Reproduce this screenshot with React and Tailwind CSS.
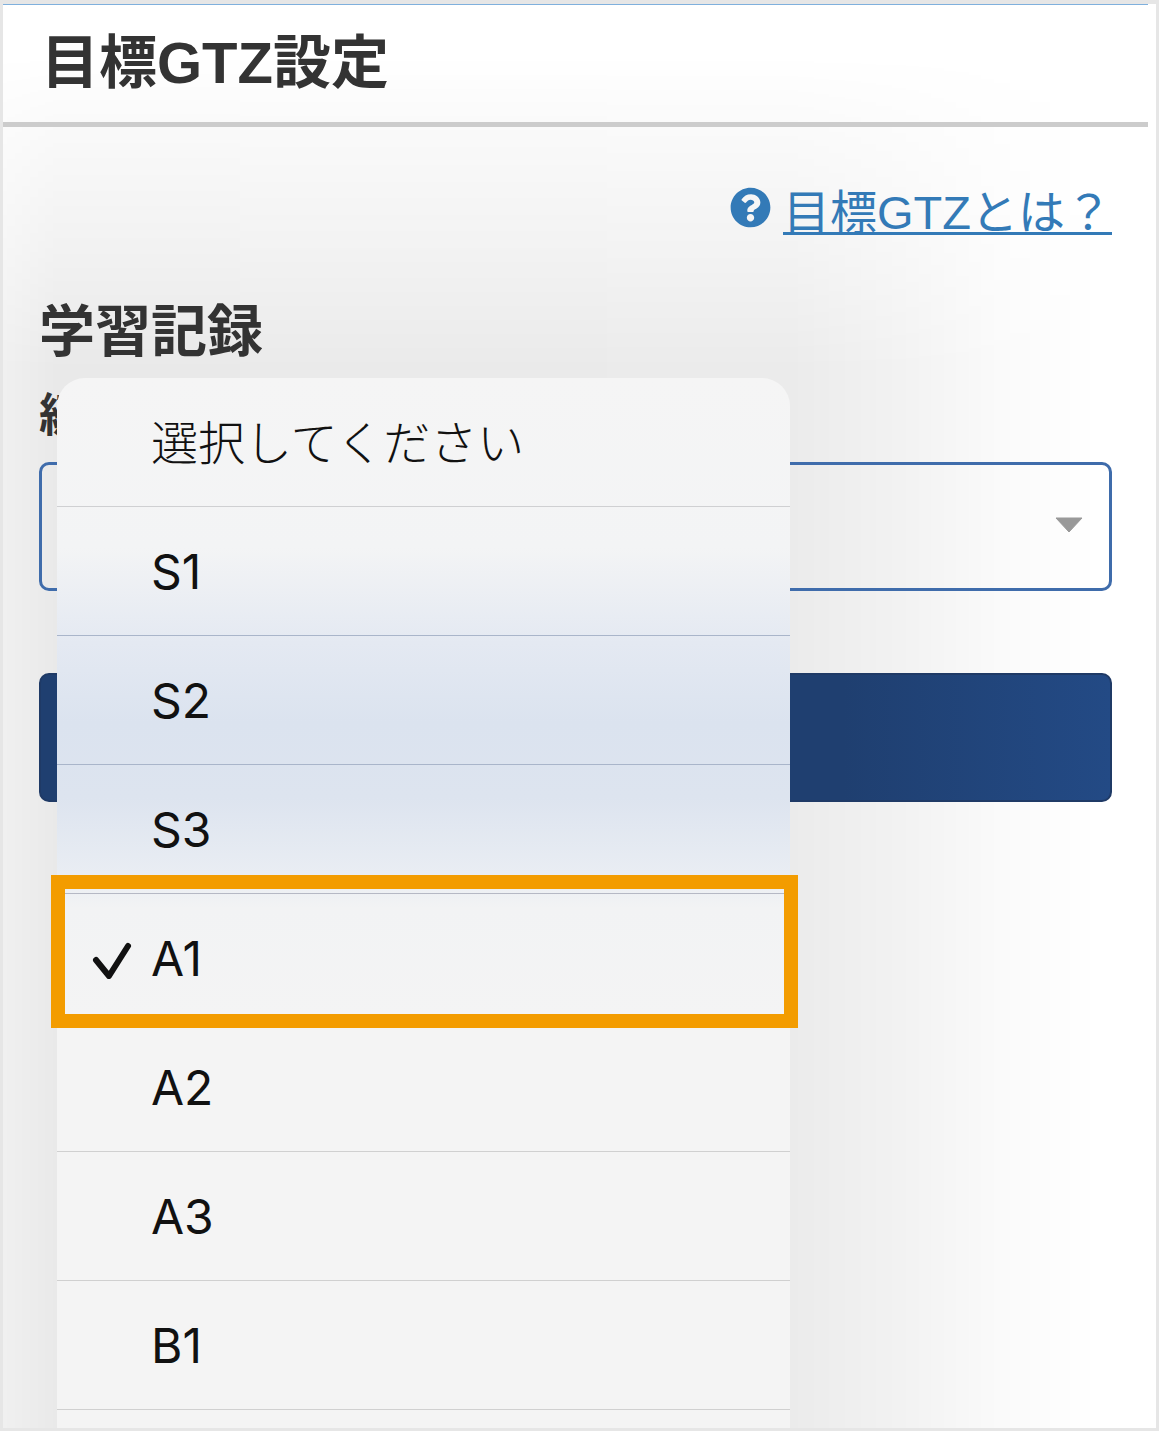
import { FaQuestionCircle } from 'react-icons/fa'

const options = [
  { label: '選択してください', line: 'border-[#cfd0d2]' },
  { label: 'S1', line: 'border-[#a9b5ca]' },
  { label: 'S2', line: 'border-[#a9b5ca]' },
  { label: 'S3', line: 'border-[#b5b8c4]' },
  { label: 'A1', line: 'border-[#d0d0d0]' },
  { label: 'A2', line: 'border-[#d0d0d0]' },
  { label: 'A3', line: 'border-[#d0d0d0]' },
  { label: 'B1', line: 'border-[#d0d0d0]' },
  { label: '', line: 'border-transparent' },
]

export default function App() {
  return (
    <div className="relative isolate w-[1159px] h-[1431px] overflow-hidden bg-white border-t-4 border-x-[3px] border-b-[3px] border-[#e6e6e6] font-['Liberation_Sans','Noto_Sans_CJK_JP',sans-serif] text-[#333]">
      {/* soft shade the open menu casts on the page behind it */}
      <div className="absolute inset-0 -z-10 bg-[linear-gradient(90deg,rgba(0,0,0,0.06)_0px,rgba(0,0,0,0.085)_54px,rgba(0,0,0,0.08)_787px,rgba(0,0,0,0.05)_897px,rgba(0,0,0,0.02)_997px,rgba(0,0,0,0)_1097px)] [mask-image:linear-gradient(180deg,transparent_50px,rgba(0,0,0,0.25)_123px,rgba(0,0,0,0.6)_246px,black_366px)]" />

      <header className="mr-[8px] h-[123px] border-t border-b-[5px] border-t-[#7fb0dd] border-b-[#ccc] pl-[38px] pb-[2px] flex items-center">
        <h1 className="text-[58px] leading-none font-bold">目標GTZ設定</h1>
      </header>

      <main className="pl-[36px] pr-[44px]">
        <div className="flex justify-end items-start pt-[60px] h-[112px]">
          <FaQuestionCircle className="w-[41px] h-[41px] text-[#337ab7] mr-[12px]" />
          <a href="#" className="block h-[49px] border-b-[3px] border-[#337ab7] text-[47px] leading-[54px] text-[#337ab7] mt-[-1px]">
            目標GTZとは？
          </a>
        </div>

        <h2 className="mt-[61px] text-[56px] leading-[64px] font-bold">学習記録</h2>
        <label className="block mt-[19px] text-[46px] leading-[64px] font-bold">級</label>

        <div className="mt-[15px] h-[129px] rounded-[10px] border-[3px] border-[#3f6cab] flex items-center justify-end pr-[26px]">
          <svg width="28" height="16" viewBox="0 0 28 16" className="mt-[-3px]">
            <path d="M1 1h26L14 15z" fill="#999" stroke="#999" strokeLinejoin="round" />
          </svg>
        </div>

        <button className="block w-full mt-[82px] h-[129px] rounded-[10px] border-2 border-[#1f3a66] bg-[linear-gradient(90deg,#1f3f70,#1f3f70_75%,#234a85)]" />
      </main>

      <div className="absolute left-[54px] top-[374px] w-[733px] h-[1050px] overflow-hidden rounded-t-[28px] bg-[linear-gradient(180deg,#f5f5f5_0px,#f3f4f5_170px,#e4e9f2_265px,#dbe3ef_345px,#dde4ef_420px,#e9edf3_495px,#f2f3f4_530px,#f4f4f4_640px,#f4f4f4_1050px)] font-['Inter','Noto_Sans_CJK_JP',sans-serif] text-[#111]">
        {options.map(({ label, line }, i) => (
          <div key={i} className={`relative flex items-center h-[129px] pl-[94px] pt-[2px] border-b ${line}`}>
            {label === 'A1' && (
              <svg width="40" height="38" viewBox="0 0 40 38" className="absolute left-[35px] top-[47px]">
                <path d="M4 19l13 16L36 5" fill="none" stroke="#111" strokeWidth="6" strokeLinecap="round" strokeLinejoin="round" />
              </svg>
            )}
            {i === 0 ? (
              <span className="text-[47px] font-light">{label}</span>
            ) : (
              <span className="text-[48px]">{label}</span>
            )}
          </div>
        ))}
      </div>

      {/* highlight frame around the selected option */}
      <div className="absolute left-[48px] top-[871px] w-[747px] h-[153px] border-[14px] border-[#f39c00]" />
    </div>
  )
}
